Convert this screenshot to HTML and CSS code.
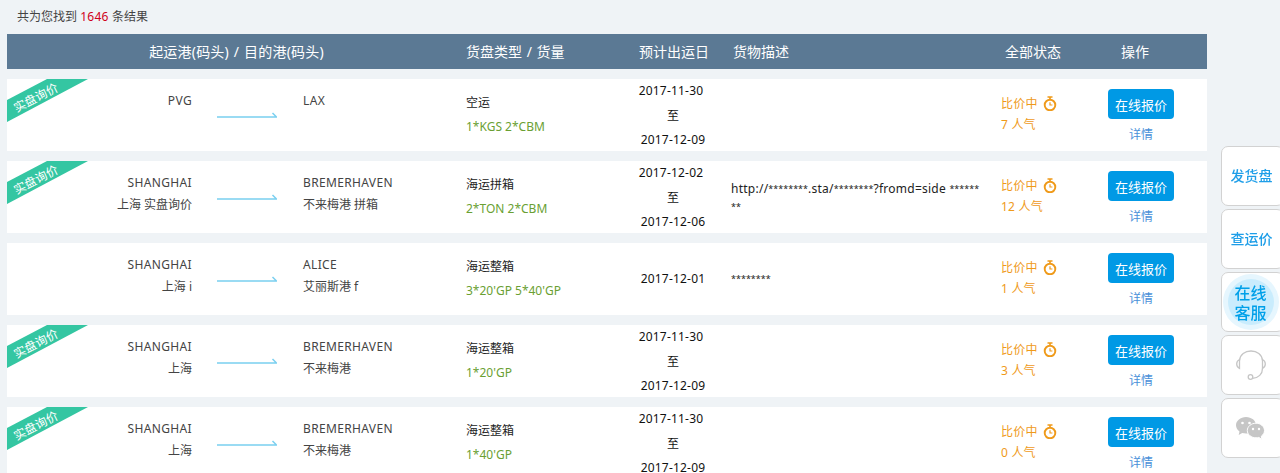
FILE: index.html
```html
<!DOCTYPE html>
<html lang="zh">
<head>
<meta charset="utf-8">
<title>货盘列表</title>
<link rel="stylesheet" href="styles.css">
</head>
<body>
<svg class="defs" width="0" height="0" aria-hidden="true">
  <symbol id="arrow" viewBox="0 0 60 8"><path d="M0 6H59.500L55.500 2" fill="none" stroke="#7acff0" stroke-width="1.500"/></symbol>
  <symbol id="watch" viewBox="0 0 14 15"><path d="M4.500 1h5M7 1v2.500" stroke="#ef9a1a" stroke-width="1.600" fill="none"/><circle cx="7" cy="9" r="5.300" fill="none" stroke="#ef9a1a" stroke-width="1.900"/><path d="M7 6.200V9h2.400" stroke="#ef9a1a" stroke-width="1.200" fill="none"/></symbol>
  <symbol id="ribbon" viewBox="0 0 81 43"><polygon points="0,21 40,0 81,0 0,43" fill="#34c6a2"/></symbol>
</svg>
<main class="page">
  <p class="summary">共为您找到 <em>1646</em> 条结果</p>
  <div class="grid head">
    <div class="h-route">起运港(码头) / 目的港(码头)</div>
    <div class="h-cargo">货盘类型 / 货量</div>
    <div class="center">预计出运日</div>
    <div class="h-desc">货物描述</div>
    <div class="h-status">全部状态</div>
    <div class="h-op">操作</div>
  </div>

  <article class="grid row">
    <svg class="ribbon"><use href="#ribbon"/></svg><span class="ribbon-text">实盘询价</span>
    <div class="port from"><span class="lat">PVG</span></div>
    <svg class="arrow"><use href="#arrow"/></svg>
    <div class="port"><span class="lat">LAX</span></div>
    <div class="cargo">空运<b>1*KGS 2*CBM</b></div>
    <div class="date"><span class="first">2017-11-30</span><span>至</span><span>2017-12-09</span></div>
    <div class="desc"></div>
    <div class="status"><span>比价中 <svg class="watch"><use href="#watch"/></svg></span><span>7 人气</span></div>
    <div class="op"><button class="btn">在线报价</button><a class="link">详情</a></div>
  </article>

  <article class="grid row">
    <svg class="ribbon"><use href="#ribbon"/></svg><span class="ribbon-text">实盘询价</span>
    <div class="port from"><span class="lat">SHANGHAI</span><br>上海 实盘询价</div>
    <svg class="arrow"><use href="#arrow"/></svg>
    <div class="port"><span class="lat">BREMERHAVEN</span><br>不来梅港 拼箱</div>
    <div class="cargo">海运拼箱<b>2*TON 2*CBM</b></div>
    <div class="date"><span class="first">2017-12-02</span><span>至</span><span>2017-12-06</span></div>
    <div class="desc">http://<span class="star">********</span>.sta/<span class="star">********</span>?fromd=side <span class="star">********</span></div>
    <div class="status"><span>比价中 <svg class="watch"><use href="#watch"/></svg></span><span>12 人气</span></div>
    <div class="op"><button class="btn">在线报价</button><a class="link">详情</a></div>
  </article>

  <article class="grid row">
    <div class="port from"><span class="lat">SHANGHAI</span><br>上海 i</div>
    <svg class="arrow"><use href="#arrow"/></svg>
    <div class="port"><span class="lat">ALICE</span><br>艾丽斯港 f</div>
    <div class="cargo">海运整箱<b>3*20'GP 5*40'GP</b></div>
    <div class="date"><span>2017-12-01</span></div>
    <div class="desc"><span class="star">********</span></div>
    <div class="status"><span>比价中 <svg class="watch"><use href="#watch"/></svg></span><span>1 人气</span></div>
    <div class="op"><button class="btn">在线报价</button><a class="link">详情</a></div>
  </article>

  <article class="grid row">
    <svg class="ribbon"><use href="#ribbon"/></svg><span class="ribbon-text">实盘询价</span>
    <div class="port from"><span class="lat">SHANGHAI</span><br>上海</div>
    <svg class="arrow"><use href="#arrow"/></svg>
    <div class="port"><span class="lat">BREMERHAVEN</span><br>不来梅港</div>
    <div class="cargo">海运整箱<b>1*20'GP</b></div>
    <div class="date"><span class="first">2017-11-30</span><span>至</span><span>2017-12-09</span></div>
    <div class="desc"></div>
    <div class="status"><span>比价中 <svg class="watch"><use href="#watch"/></svg></span><span>3 人气</span></div>
    <div class="op"><button class="btn">在线报价</button><a class="link">详情</a></div>
  </article>

  <article class="grid row">
    <svg class="ribbon"><use href="#ribbon"/></svg><span class="ribbon-text">实盘询价</span>
    <div class="port from"><span class="lat">SHANGHAI</span><br>上海</div>
    <svg class="arrow"><use href="#arrow"/></svg>
    <div class="port"><span class="lat">BREMERHAVEN</span><br>不来梅港</div>
    <div class="cargo">海运整箱<b>1*40'GP</b></div>
    <div class="date"><span class="first">2017-11-30</span><span>至</span><span>2017-12-09</span></div>
    <div class="desc"></div>
    <div class="status"><span>比价中 <svg class="watch"><use href="#watch"/></svg></span><span>0 人气</span></div>
    <div class="op"><button class="btn">在线报价</button><a class="link">详情</a></div>
  </article>
</main>

<aside class="side">
  <a class="side-item">发货盘</a>
  <a class="side-item">查运价</a>
  <a class="side-item service"><span class="bubble">在线<br>客服</span></a>
  <a class="side-item">
    <svg class="side-icon" width="30" height="30" viewBox="0 0 30 30"><g fill="none" stroke="#c6c6c6" stroke-width="1.300"><path d="M3.500 10.500C4 4.500 9 1 15 1s11 3.500 11.500 9.500"/><path d="M3.500 9.500C1.500 10.500 .7 12 .7 14s1 3.500 2.800 4.500z"/><path d="M26.500 9.500c2 1 2.800 2.500 2.800 4.500s-1 3.500-2.800 4.500z"/><path d="M26.500 18.500c0 5.500-4 9.500-10 9.800"/><circle cx="14.500" cy="27" r="2.300"/></g></svg>
  </a>
  <a class="side-item">
    <svg class="side-icon" width="29" height="23" viewBox="0 0 29 23"><path d="M10 0C4.500 0 0 3.700 0 8.200c0 2.500 1.400 4.700 3.500 6.200L2.700 18l3.500-2c1.200.3 2.500.5 3.800.5 5.500 0 10-3.700 10-8.300S15.500 0 10 0z" fill="#c6c6c6"/><path d="M20 6.200c-4.800 0-8.700 3.300-8.700 7.300s3.900 7.300 8.700 7.300c1 0 1.900-.1 2.800-.4l3.200 2-.7-3.200c2-1.400 3.200-3.400 3.200-5.700 0-4-3.900-7.300-8.500-7.300z" fill="#c6c6c6" stroke="#fff" stroke-width="1"/><g fill="#fff"><circle cx="6.500" cy="6" r="1.300"/><circle cx="13.500" cy="6" r="1.300"/><circle cx="17" cy="12" r="1.200"/><circle cx="23" cy="12" r="1.200"/></g></svg>
  </a>
</aside>
</body>
</html>
```

FILE: styles.css
```css
html, body { margin: 0; height: 473px; overflow: hidden; }
body {
  background: #eff3f6;
  color: #333;
  font: 12px/22px "Noto Sans", "Noto Sans CJK SC", sans-serif;
}
.defs { position: absolute; }
.page { width: 1200px; margin-left: 7px; }
.summary { margin: 0; height: 34px; line-height: 33px; padding-left: 10px; color: #444; }
.summary em { font-style: normal; color: #d0021b; letter-spacing: .3px; }

.grid {
  display: grid;
  grid-template-columns: 185px 111px 163px 156px 104px 275px 80px 120px 6px;
}
.head {
  height: 35px;
  margin-bottom: 10px;
  background: #5b7994;
  color: #fff;
  font-size: 14px;
  line-height: 35px;
}
.h-route { grid-column: 1 / 4; text-align: center; word-spacing: 1px; letter-spacing: .2px; }
.h-cargo { word-spacing: 1px; }
.center { text-align: center; }
.h-desc { padding-left: 7px; }
.h-status { padding-left: 4px; }
.h-op { padding-right: 12px; text-align: center; }

.row {
  position: relative;
  height: 72px;
  margin-bottom: 10px;
  background: #fff;
}
.ribbon { position: absolute; left: 0; top: 0; width: 81px; height: 43px; }
.ribbon-text {
  position: absolute;
  left: 1px;
  top: 8px;
  width: 56px;
  color: #fff;
  text-align: center;
  transform: rotate(-27deg);
}
.port { padding-top: 11px; color: #444; }
.lat { letter-spacing: .35px; }
.from { text-align: right; }
.arrow { justify-self: center; width: 60px; height: 8px; margin-top: 32px; transform: translateX(-1px); }
.cargo { padding-top: 12px; color: #222; line-height: 24px; }
.cargo b { display: block; font-weight: 400; color: #6a9f33; }
.date {
  display: flex;
  flex-direction: column;
  justify-content: center;
  align-items: center;
  margin-left: -2px;
  color: #111;
  letter-spacing: .2px;
  line-height: 24.5px;
}
.date .first { margin-right: 4px; }
.desc {
  align-self: center;
  padding: 0 18px 0 5px;
  color: #222;
  letter-spacing: .25px;
  line-height: 18px;
  word-break: break-all;
}
.star { font-size: 9px; letter-spacing: 0; vertical-align: 1px; }
.status { padding-top: 14px; color: #ef9a1a; line-height: 21px; letter-spacing: .2px; }
.status span { display: block; }
.watch { width: 14px; height: 15px; margin-left: 2px; vertical-align: -3px; }
.op { display: flex; flex-direction: column; align-items: center; padding-top: 10px; }
.btn {
  width: 66px;
  height: 30px;
  padding: 0;
  border: 0;
  border-radius: 4px;
  background: #0099e5;
  color: #fff;
  font: 13px "Noto Sans", "Noto Sans CJK SC", sans-serif;
}
.link { margin-top: 5px; color: #4a90d9; line-height: 22px; }

.side {
  position: fixed;
  right: -4px;
  top: 146px;
  display: flex;
  flex-direction: column;
  gap: 3px;
}
.side-item {
  box-sizing: border-box;
  display: flex;
  align-items: center;
  justify-content: center;
  width: 63px;
  height: 60px;
  padding-right: 2px;
  border: 1px solid #d2d2d2;
  border-radius: 7px;
  background: #fff;
  color: #1e9ee8;
  font-size: 14px;
  font-weight: 500;
}
.side-icon { margin-right: 2px; }
.bubble {
  display: block;
  width: 46px;
  height: 46px;
  margin-right: 2px;
  border-radius: 50%;
  background: #c9ecfd;
  box-shadow: 0 0 0 5px #e6f6fe;
  color: #00a0e9;
  font-size: 16px;
  line-height: 20px;
  padding-top: 4px;
  box-sizing: border-box;
  text-align: center;
}
```
